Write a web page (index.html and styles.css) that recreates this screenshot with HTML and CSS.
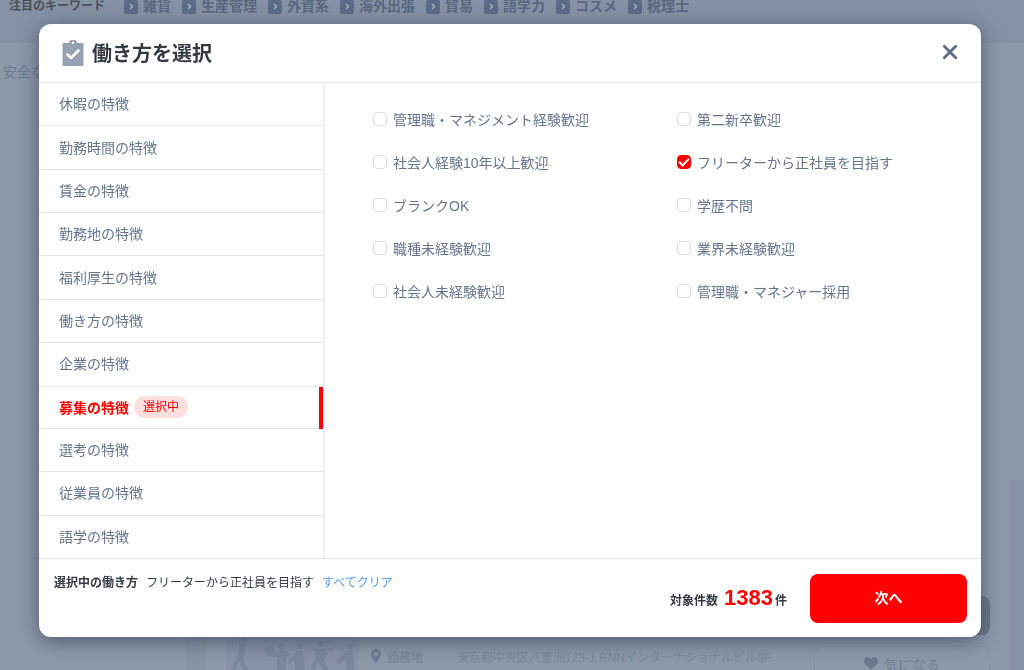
FILE: index.html
```html
<!DOCTYPE html>
<html lang="ja">
<head>
<meta charset="utf-8">
<meta name="viewport" content="width=device-width, initial-scale=1">
<title>働き方を選択</title>
<link rel="stylesheet" href="styles.css">
</head>
<body>
<div class="page">
  <div class="keywords">
    <span class="keywords-title">注目のキーワード</span>
    <nav class="keywords-list">
      <a class="keyword" href="#"><svg class="chip" viewBox="0 0 14 14"><rect width="14" height="14" rx="2"/><path d="M6 4 8.500 6.500 6 9"/></svg>雑貨</a>
      <a class="keyword" href="#"><svg class="chip" viewBox="0 0 14 14"><rect width="14" height="14" rx="2"/><path d="M6 4 8.500 6.500 6 9"/></svg>生産管理</a>
      <a class="keyword" href="#"><svg class="chip" viewBox="0 0 14 14"><rect width="14" height="14" rx="2"/><path d="M6 4 8.500 6.500 6 9"/></svg>外資系</a>
      <a class="keyword" href="#"><svg class="chip" viewBox="0 0 14 14"><rect width="14" height="14" rx="2"/><path d="M6 4 8.500 6.500 6 9"/></svg>海外出張</a>
      <a class="keyword" href="#"><svg class="chip" viewBox="0 0 14 14"><rect width="14" height="14" rx="2"/><path d="M6 4 8.500 6.500 6 9"/></svg>貿易</a>
      <a class="keyword" href="#"><svg class="chip" viewBox="0 0 14 14"><rect width="14" height="14" rx="2"/><path d="M6 4 8.500 6.500 6 9"/></svg>語学力</a>
      <a class="keyword" href="#"><svg class="chip" viewBox="0 0 14 14"><rect width="14" height="14" rx="2"/><path d="M6 4 8.500 6.500 6 9"/></svg>コスメ</a>
      <a class="keyword" href="#"><svg class="chip" viewBox="0 0 14 14"><rect width="14" height="14" rx="2"/><path d="M6 4 8.500 6.500 6 9"/></svg>税理士</a>
    </nav>
  </div>
  <div class="results">
    <p class="lead">安全な</p>
    <article class="job">
      <svg class="job-photo" viewBox="0 0 133 45">
        <rect class="photo-bg" width="133" height="45"/>
        <g class="photo-ink">
          <circle cx="18" cy="14" r="3"/><path d="M13 18c5-2 8 1 7 8l-3 8 5 11h-4l-5-9-4 9H5l7-14z"/>
          <path d="m37 25 9-5 4 7-9 5z"/>
          <circle cx="55" cy="21" r="3"/><path d="m43 31 10-6h5l7 4-5 4v12h-9v-12z"/>
          <circle cx="74" cy="21" r="3"/><path d="m62 37 9-11 6-1 2 20H69l-1-11-5 5z"/>
          <circle cx="94" cy="19" r="3"/><path d="m84 22 8 2h6l4 4-4 8 5 9h-6l-5-8-4 8h-4l6-13-1-6z"/>
          <circle cx="124" cy="21" r="3"/><path d="m110 37 10-11 6-1 3 20h-8l-2-11-6 5z"/>
        </g>
        <circle class="photo-line" cx="104" cy="21" r="5"/><path class="photo-line" d="m104 18 3 2-1 4h-4l-1-4z"/>
      </svg>
      <div class="job-info">
        <svg class="pin" viewBox="0 0 10 14"><path fill-rule="evenodd" d="M5 0a5 5 0 0 1 5 5c0 3-2.500 6-5 9C2.500 11 0 8 0 5a5 5 0 0 1 5-5zm0 3a2 2 0 1 0 0 4 2 2 0 0 0 0-4z"/></svg>
        <span class="job-label">勤務地</span>
        <span>東京都中央区八重洲123-1 RNNインターナショナルビル8F</span>
      </div>
      <div class="job-actions">
        <span class="job-more"></span>
        <button class="like" type="button"><svg class="heart" viewBox="0 0 14 13"><path d="M7 13 1.300 7.300C-2.500 2.500 3.500-2.500 7 2c3.500-4.500 9.500.5 5.700 5.300z"/></svg>気になる</button>
      </div>
    </article>
  </div>
</div>

<div class="overlay">
  <section class="modal" role="dialog" aria-modal="true" aria-labelledby="modal-title">
    <header class="modal-head">
      <svg class="clipboard" viewBox="0 0 22 26"><path d="M1.500 3H7a4 3.500 0 0 1 8 0h5.500a1 1 0 0 1 1 1v21a1 1 0 0 1-1 1h-19a1 1 0 0 1-1-1V4a1 1 0 0 1 1-1z"/><circle class="clip-hole" cx="11" cy="2.700" r="1.300"/><path class="clip-check" d="m5.500 14.500 3.500 3.500 7.500-7.500"/></svg>
      <h1 class="modal-title" id="modal-title">働き方を選択</h1>
      <button class="close" type="button" aria-label="閉じる"><svg viewBox="0 0 14 14"><path d="M2 2l10 10M12 2 2 12"/></svg></button>
    </header>
    <div class="modal-body">
      <nav class="tabs">
        <button class="tab" type="button">休暇の特徴</button>
        <button class="tab" type="button">勤務時間の特徴</button>
        <button class="tab" type="button">賃金の特徴</button>
        <button class="tab" type="button">勤務地の特徴</button>
        <button class="tab" type="button">福利厚生の特徴</button>
        <button class="tab" type="button">働き方の特徴</button>
        <button class="tab" type="button">企業の特徴</button>
        <button class="tab active" type="button">募集の特徴<span class="badge">選択中</span></button>
        <button class="tab" type="button">選考の特徴</button>
        <button class="tab" type="button">従業員の特徴</button>
        <button class="tab" type="button">語学の特徴</button>
      </nav>
      <div class="options">
        <label class="option"><input class="check" type="checkbox">管理職・マネジメント経験歓迎</label>
        <label class="option"><input class="check" type="checkbox">第二新卒歓迎</label>
        <label class="option"><input class="check" type="checkbox">社会人経験10年以上歓迎</label>
        <label class="option"><input class="check" type="checkbox" checked>フリーターから正社員を目指す</label>
        <label class="option"><input class="check" type="checkbox">ブランクOK</label>
        <label class="option"><input class="check" type="checkbox">学歴不問</label>
        <label class="option"><input class="check" type="checkbox">職種未経験歓迎</label>
        <label class="option"><input class="check" type="checkbox">業界未経験歓迎</label>
        <label class="option"><input class="check" type="checkbox">社会人未経験歓迎</label>
        <label class="option"><input class="check" type="checkbox">管理職・マネジャー採用</label>
      </div>
    </div>
    <footer class="modal-foot">
      <div class="selection">
        <strong>選択中の働き方</strong>
        <span>フリーターから正社員を目指す</span>
        <a class="clear" href="#">すべてクリア</a>
      </div>
      <div class="submit">
        <p class="count">対象件数<span class="count-number">1383</span>件</p>
        <button class="next" type="button">次へ</button>
      </div>
    </footer>
  </section>
</div>
</body>
</html>
```
FILE: styles.css
```css
* { box-sizing: border-box; }

body {
  margin: 0;
  background: #8d98aa;
  color: #343a40;
  font-family: "Liberation Sans", "Noto Sans CJK JP", sans-serif;
  font-size: 14px;
}

button {
  border: 0;
  padding: 0;
  background: none;
  color: inherit;
  font: inherit;
  cursor: pointer;
}

a { color: inherit; text-decoration: none; }
p { margin: 0; }

/* Dimmed page behind the dialog */
.page {
  display: flex;
  flex-direction: column;
  height: 100vh;
  overflow: hidden;
}

.keywords {
  display: flex;
  flex: none;
  align-items: flex-start;
  gap: 19px;
  height: 43px;
  padding-left: 9px;
  background: #8592a5;
  color: #5a6880;
  font-weight: 700;
  line-height: 12px;
  white-space: nowrap;
}

.keywords-title { color: #4b5058; font-size: 12px; }
.keywords-list { display: flex; gap: 11px; }
.keyword { display: flex; gap: 5px; }
.chip { width: 14px; height: 14px; fill: #5c6b86; }
.chip path { fill: none; stroke: #a5b0c2; stroke-width: 1.5; }

.results {
  display: flex;
  flex: 1;
  flex-direction: column;
  justify-content: space-between;
}

.lead {
  padding: 19px 3px;
  color: #6c7a90;
  line-height: 20px;
}

.job {
  display: flex;
  align-items: flex-end;
  height: 190px;
  margin-left: 186px;
  padding: 0 20px;
  border-left: 20px solid #8794a6;
  border-right: 14px solid #8592a5;
  color: #7c889b;
  font-size: 12px;
}

.job-photo { flex: none; width: 133px; height: 45px; }
.photo-bg { fill: #8793a6; }
.photo-ink { fill: #7b889b; }
.photo-line { fill: none; stroke: #7b889b; }

.job-info {
  display: flex;
  flex: 1;
  align-items: center;
  gap: 6px;
  height: 28px;
  padding-left: 12px;
  white-space: nowrap;
}

.job-label { width: 64px; font-weight: 700; }
.pin { width: 10px; height: 14px; fill: #707d92; }

.job-actions {
  display: flex;
  flex: none;
  flex-direction: column;
  gap: 11px;
  width: 176px;
}

.job-more { height: 39px; border-radius: 8px; background: #6c7789; }

.like {
  display: flex;
  align-items: center;
  justify-content: center;
  gap: 6px;
  height: 24px;
  padding-top: 10px;
  border: 1px solid #8692a5;
  border-bottom: 0;
  border-radius: 8px 8px 0 0;
  color: #737f93;
  font-size: 14px;
}

.heart { width: 14px; height: 13px; fill: #6c788d; }

/* Dialog */
.overlay {
  position: fixed;
  inset: 0;
  display: flex;
  padding: 24px 43px 33px 39px;
}

.modal {
  display: flex;
  flex: 1;
  flex-direction: column;
  border-radius: 12px;
  background: #fff;
  box-shadow: 0 4px 20px rgba(44, 54, 74, .65);
  overflow: hidden;
}

.modal-head {
  display: flex;
  flex: none;
  align-items: center;
  gap: 8px;
  height: 59px;
  padding: 0 23px;
  border-bottom: 1px solid #e1e3ec;
}

.clipboard { width: 22px; height: 26px; fill: #98a1b1; }
.clip-hole { fill: #fff; }
.clip-check { fill: none; stroke: #fff; stroke-width: 2.5; stroke-linecap: round; stroke-linejoin: round; }
.modal-title { margin: 0; padding-top: 2px; font-size: 20px; line-height: 30px; }

.close { display: flex; margin-left: auto; padding-bottom: 2px; }

.close svg {
  width: 16px;
  height: 16px;
  fill: none;
  stroke: #5c6b86;
  stroke-width: 2.5;
  stroke-linecap: round;
}

.modal-body { display: flex; flex: 1; min-height: 0; }

.tabs {
  display: flex;
  flex: none;
  flex-direction: column;
  width: 286px;
  border-right: 2px solid #eeeff4;
}

.tab {
  display: flex;
  flex: 1;
  align-items: center;
  gap: 5px;
  padding: 0 20px 2px;
  border-bottom: 1px solid #e4e6ea;
  color: #66748d;
}

.tab:last-child { border-bottom: 0; }

.tab.active {
  border-right: 4px solid #f00;
  border-bottom: 0;
  box-shadow: inset 0 -1px #e4e6ea;
  color: #f00;
  font-weight: 700;
}

.badge {
  padding: 0 9px;
  border-radius: 11px;
  background: #fddfdf;
  font-size: 12px;
  font-weight: 400;
  line-height: 22px;
}

.options {
  display: grid;
  flex: 1;
  grid-template-columns: 1fr 1fr;
  align-content: start;
  padding: 14px 0 0 48px;
}

.option {
  display: flex;
  align-items: center;
  gap: 6px;
  height: 43px;
  color: #66748d;
}

.check {
  appearance: none;
  display: grid;
  place-items: center;
  width: 14px;
  height: 14px;
  margin: 0;
  border: 1px solid #d9dce4;
  border-radius: 4px;
}

.check:checked { border-color: #f00; background: #f00; }

.check:checked::after {
  content: "";
  width: 8px;
  height: 4px;
  margin-bottom: 2px;
  border: solid #fff;
  border-width: 0 0 2px 2px;
  transform: rotate(-45deg);
}

.modal-foot {
  display: flex;
  flex: none;
  justify-content: space-between;
  padding: 15px 14px 14px 15px;
  border-top: 1px solid #e1e3ec;
  font-size: 12px;
}

.selection { display: flex; gap: 8px; line-height: 18px; }
.clear { color: #5c9ce6; }
.submit { display: flex; gap: 23px; }
.count { padding-top: 9px; font-weight: 700; line-height: 30px; }

.count-number { margin: 0 2px 0 6px; color: #f00; font-size: 22px; }

.next {
  width: 157px;
  height: 49px;
  padding-bottom: 4px;
  border-radius: 8px;
  background: #f00;
  color: #fff;
  font-size: 14px;
  font-weight: 700;
}
```
